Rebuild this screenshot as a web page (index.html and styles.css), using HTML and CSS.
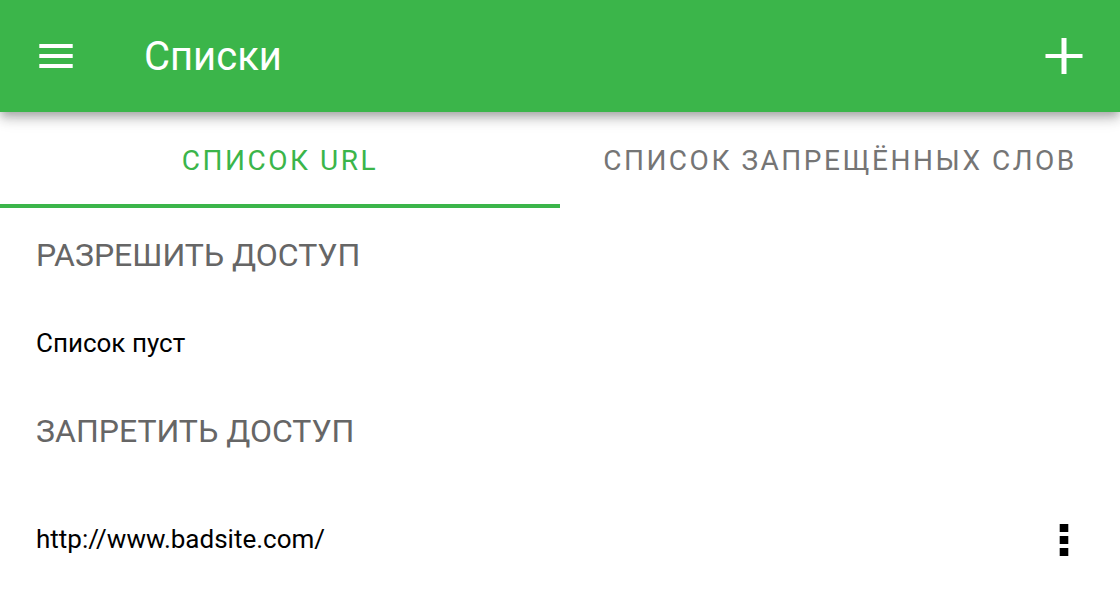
FILE: index.html
```html
<!DOCTYPE html>
<html lang="ru">
<head>
<meta charset="utf-8">
<title>Списки</title>
<meta name="viewport" content="width=device-width, initial-scale=1">
<link rel="stylesheet" href="styles.css">
</head>
<body>
<header class="app-bar">
  <button class="icon-button" type="button" aria-label="Меню">
    <svg width="48" height="48" viewBox="0 0 48 48" fill="currentColor" aria-hidden="true"><path d="M7.3 12h33.4v4H7.3zM7.3 22h33.4v4H7.3zM7.3 32h33.4v4H7.3z"/></svg>
  </button>
  <h1 class="app-title">Списки</h1>
  <button class="icon-button" type="button" aria-label="Добавить">
    <svg width="48" height="48" viewBox="0 0 48 48" fill="currentColor" aria-hidden="true"><path d="M21.5 6h5v16h16v4h-16v16h-5V26h-16v-4h16z"/></svg>
  </button>
</header>
<nav class="tabs">
  <button class="tab tab-active" type="button">СПИСОК URL</button>
  <button class="tab" type="button">СПИСОК ЗАПРЕЩЁННЫХ СЛОВ</button>
</nav>
<main class="content">
  <section>
    <h2 class="section-title">РАЗРЕШИТЬ ДОСТУП</h2>
    <p class="empty">Список пуст</p>
  </section>
  <section>
    <h2 class="section-title">ЗАПРЕТИТЬ ДОСТУП</h2>
    <div class="row">
      <span class="url">http://www.badsite.com/</span>
      <button class="icon-button" type="button" aria-label="Действия">
        <svg width="48" height="48" viewBox="0 0 48 48" fill="currentColor" aria-hidden="true"><path d="M19.7 8h8.6v8h-8.6zM19.7 20h8.6v8h-8.6zM19.7 32h8.6v8h-8.6z"/></svg>
      </button>
    </div>
  </section>
</main>
</body>
</html>
```
FILE: styles.css
```css
* { box-sizing: border-box; }
body {
  margin: 0;
  background: #fff;
  color: #000;
  font-family: Roboto, sans-serif;
}
.app-bar {
  position: relative;
  display: flex;
  align-items: center;
  height: 112px;
  padding: 0 32px;
  background: #3bb54a;
  color: #fff;
  box-shadow:
    0 4px 8px -2px rgba(0, 0, 0, 0.2),
    0 8px 10px rgba(0, 0, 0, 0.14),
    0 2px 20px rgba(0, 0, 0, 0.12);
}
.icon-button {
  display: flex;
  flex: none;
  padding: 0;
  border: 0;
  background: none;
  color: inherit;
  cursor: pointer;
}
.app-title {
  flex: 1;
  margin: 0 0 0 64px;
  padding-top: 2px;
  font-size: 40px;
  line-height: 48px;
  font-weight: 400;
}
.tabs {
  display: grid;
  grid-template-columns: 1fr 1fr;
}
.tab {
  height: 96px;
  padding: 6px 0 0;
  border: 0;
  border-bottom: 4px solid transparent;
  background: none;
  color: #757575;
  font: 400 28px/32px Roboto, sans-serif;
  letter-spacing: 0.09em;
  cursor: pointer;
}
.tab-active {
  border-bottom-color: #3bb54a;
  color: #3bb54a;
}
.content { padding: 0 32px 0 36px; }
.section-title {
  margin: 0;
  padding: 28px 0 30px;
  color: #666;
  font-size: 32px;
  line-height: 38px;
  font-weight: 400;
}
.empty {
  margin: 0;
  padding: 24px 0 26px;
  font-size: 26px;
  line-height: 30px;
}
.row {
  display: flex;
  align-items: center;
  justify-content: space-between;
  padding: 36px 0;
}
.url {
  padding-bottom: 2px;
  font-size: 26px;
  line-height: 30px;
}
```
